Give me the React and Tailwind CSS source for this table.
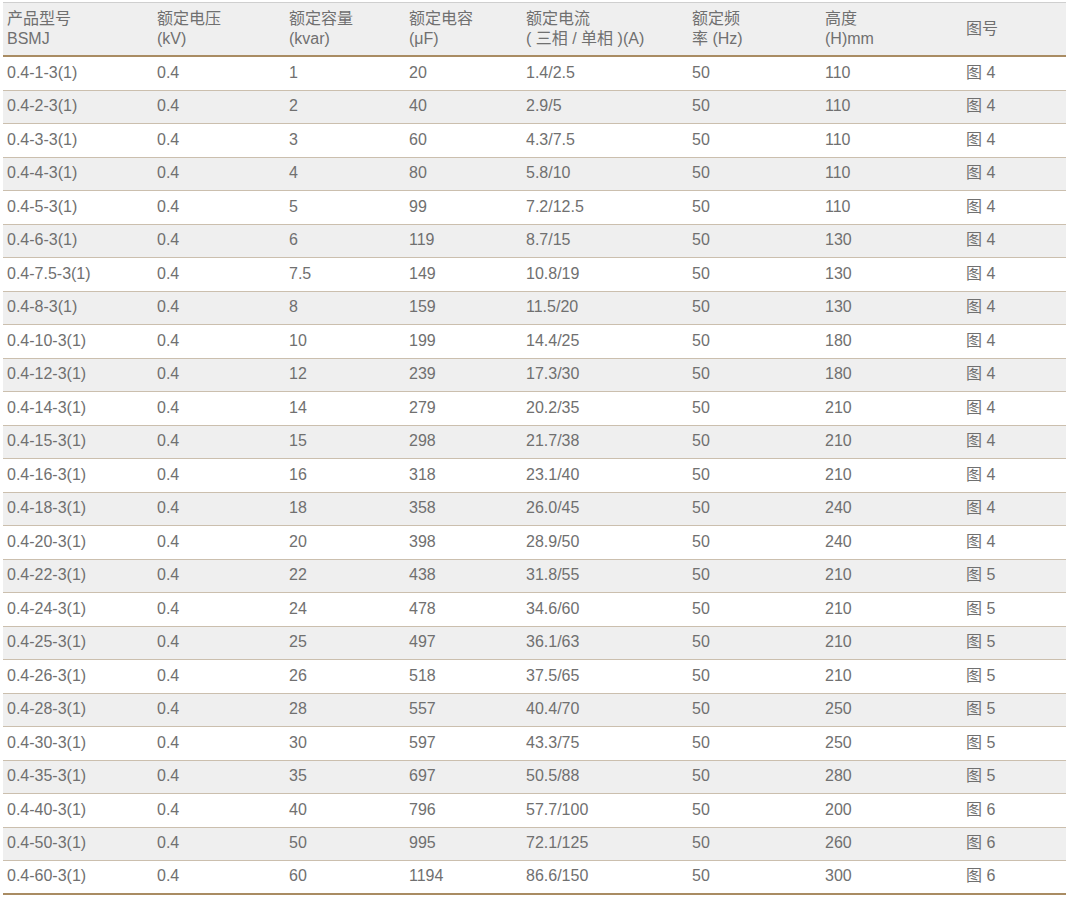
import React from 'react';

const rows = [
  ['0.4-1-3(1)', '0.4', '1', '20', '1.4/2.5', '50', '110', '图 4'],
  ['0.4-2-3(1)', '0.4', '2', '40', '2.9/5', '50', '110', '图 4'],
  ['0.4-3-3(1)', '0.4', '3', '60', '4.3/7.5', '50', '110', '图 4'],
  ['0.4-4-3(1)', '0.4', '4', '80', '5.8/10', '50', '110', '图 4'],
  ['0.4-5-3(1)', '0.4', '5', '99', '7.2/12.5', '50', '110', '图 4'],
  ['0.4-6-3(1)', '0.4', '6', '119', '8.7/15', '50', '130', '图 4'],
  ['0.4-7.5-3(1)', '0.4', '7.5', '149', '10.8/19', '50', '130', '图 4'],
  ['0.4-8-3(1)', '0.4', '8', '159', '11.5/20', '50', '130', '图 4'],
  ['0.4-10-3(1)', '0.4', '10', '199', '14.4/25', '50', '180', '图 4'],
  ['0.4-12-3(1)', '0.4', '12', '239', '17.3/30', '50', '180', '图 4'],
  ['0.4-14-3(1)', '0.4', '14', '279', '20.2/35', '50', '210', '图 4'],
  ['0.4-15-3(1)', '0.4', '15', '298', '21.7/38', '50', '210', '图 4'],
  ['0.4-16-3(1)', '0.4', '16', '318', '23.1/40', '50', '210', '图 4'],
  ['0.4-18-3(1)', '0.4', '18', '358', '26.0/45', '50', '240', '图 4'],
  ['0.4-20-3(1)', '0.4', '20', '398', '28.9/50', '50', '240', '图 4'],
  ['0.4-22-3(1)', '0.4', '22', '438', '31.8/55', '50', '210', '图 5'],
  ['0.4-24-3(1)', '0.4', '24', '478', '34.6/60', '50', '210', '图 5'],
  ['0.4-25-3(1)', '0.4', '25', '497', '36.1/63', '50', '210', '图 5'],
  ['0.4-26-3(1)', '0.4', '26', '518', '37.5/65', '50', '210', '图 5'],
  ['0.4-28-3(1)', '0.4', '28', '557', '40.4/70', '50', '250', '图 5'],
  ['0.4-30-3(1)', '0.4', '30', '597', '43.3/75', '50', '250', '图 5'],
  ['0.4-35-3(1)', '0.4', '35', '697', '50.5/88', '50', '280', '图 5'],
  ['0.4-40-3(1)', '0.4', '40', '796', '57.7/100', '50', '200', '图 6'],
  ['0.4-50-3(1)', '0.4', '50', '995', '72.1/125', '50', '260', '图 6'],
  ['0.4-60-3(1)', '0.4', '60', '1194', '86.6/150', '50', '300', '图 6'],
];

const headers = [
  ['产品型号', 'BSMJ'],
  ['额定电压', '(kV)'],
  ['额定容量', '(kvar)'],
  ['额定电容', '(μF)'],
  ['额定电流', '( 三相 / 单相 )(A)'],
  ['额定频', '率 (Hz)'],
  ['高度', '(H)mm'],
  ['图号'],
];

const grid = 'grid grid-cols-[150px_132px_120px_117px_166px_133px_141px_104px]';

export default function App() {
  return (
    <div className="bg-white w-[1072px] h-[899px] pt-[2px] pl-[3px] text-[16px] text-[#707070] font-['Liberation_Sans','Noto_Sans_CJK_SC',sans-serif]">
      <div className="w-[1063px]">
        {/* Header */}
        <div className={`${grid} h-[55px] bg-[#efefef] border-t border-[#cfcfcf] border-b-2 border-b-[#a98c63]`}>
          {headers.map((h, i) => (
            <div key={i} className="flex flex-col justify-center pl-[4px] leading-[20px]">
              {h.map((line, j) => (
                <span key={j}>{line}</span>
              ))}
            </div>
          ))}
        </div>

        {/* Body */}
        {rows.map((r, i) => (
          <div
            key={i}
            className={`${grid} h-[33.5px] ${i % 2 ? 'bg-[#efefef]' : 'bg-white'} ${
              i === rows.length - 1 ? 'border-b-2 border-[#a98c63]' : 'border-b border-[#cbbfae]'
            }`}
          >
            {r.map((c, j) => (
              <div key={j} className="flex items-center pl-[4px] pb-[1px]">
                {c}
              </div>
            ))}
          </div>
        ))}
      </div>
    </div>
  );
}
